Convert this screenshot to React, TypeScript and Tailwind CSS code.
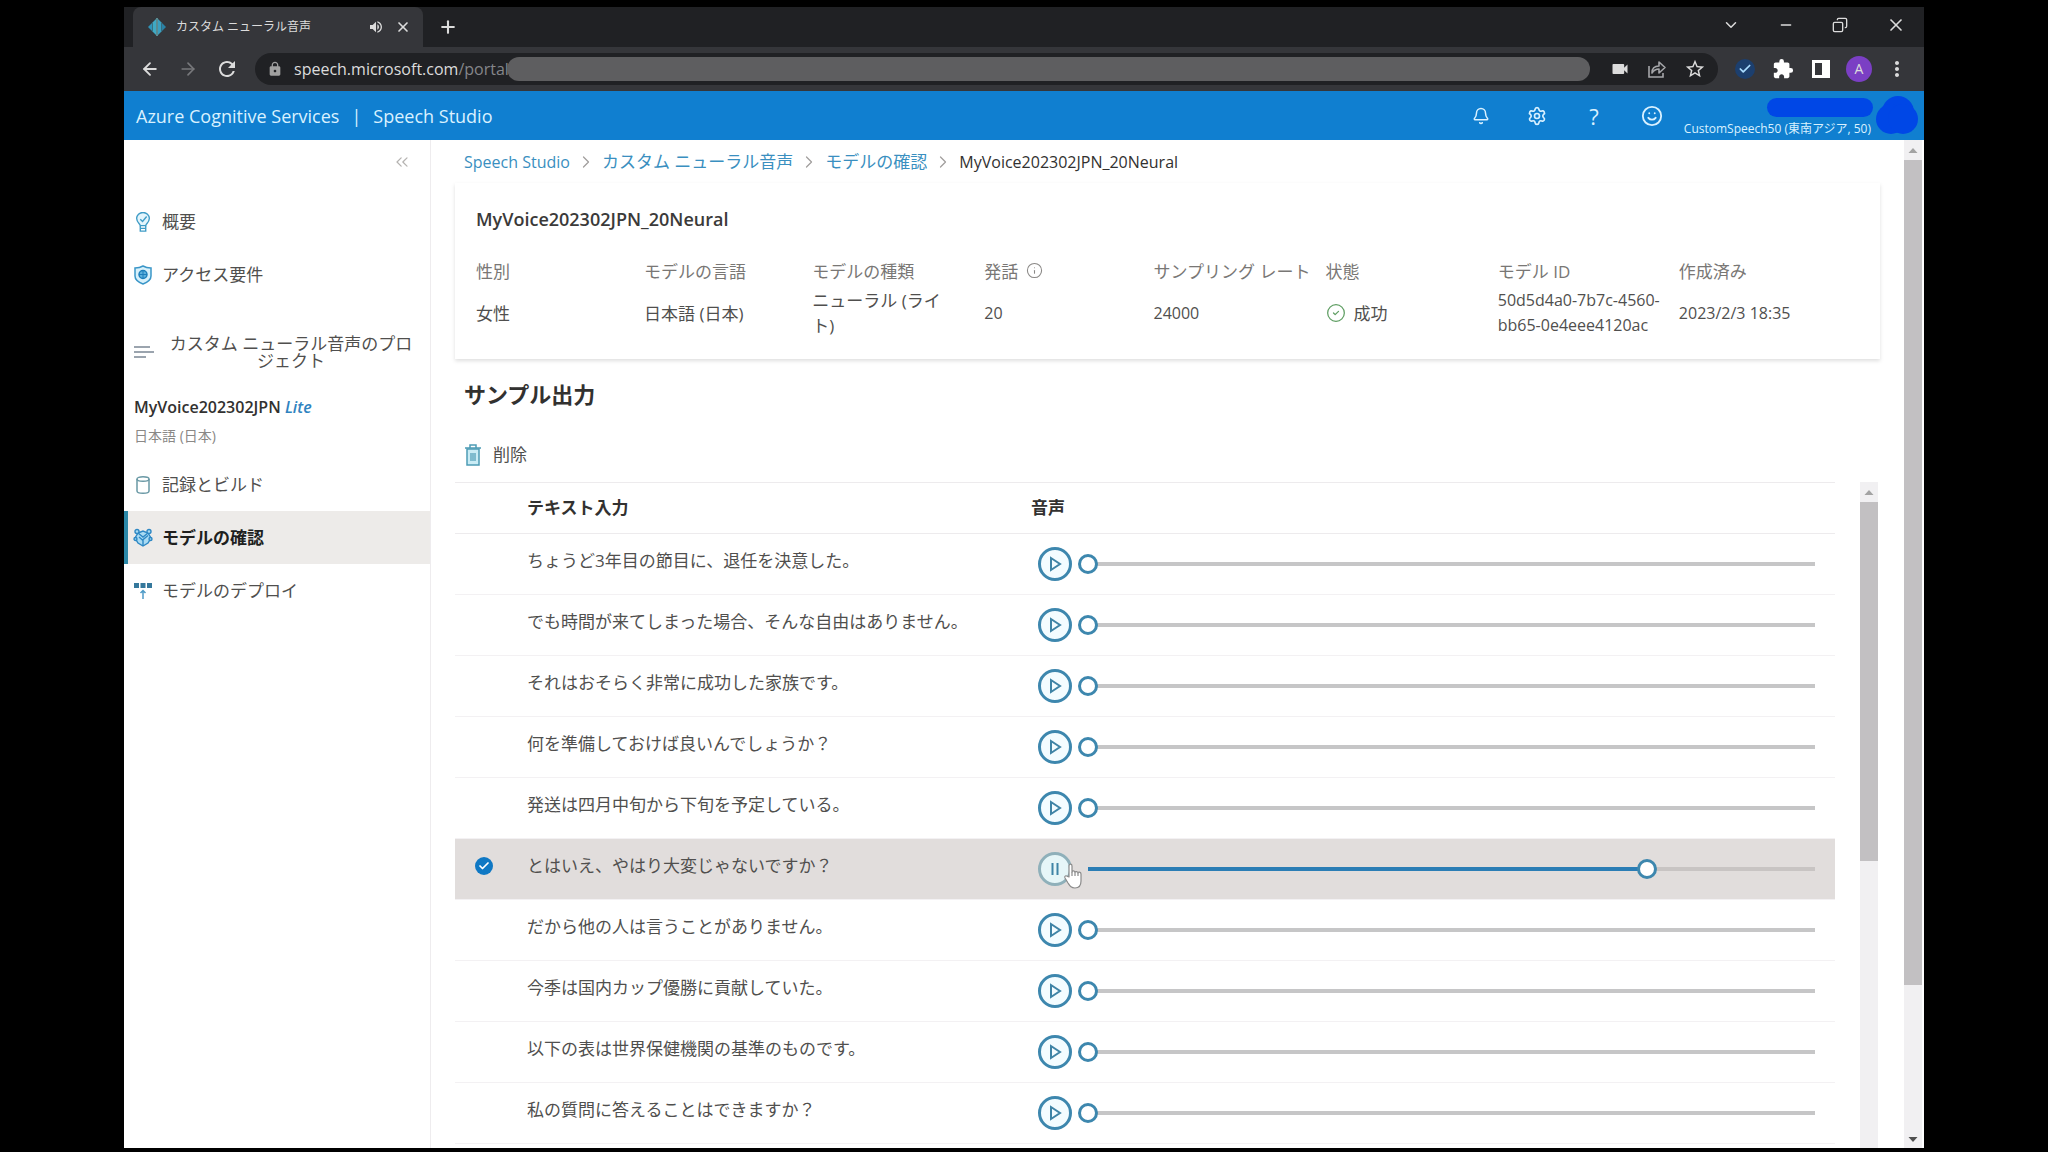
import { useState } from "react";
import type { ReactNode } from "react";
import {
  ArrowLeft,
  ArrowRight,
  Bell,
  Check,
  ChevronDown,
  ChevronRight,
  ChevronsLeft,
  CircleCheck,
  Copy,
  Info,
  Minus,
  Plus,
  Settings,
  Smile,
  X,
} from "lucide-react";
import {
  MdExtension,
  MdLock,
  MdMoreVert,
  MdRefresh,
  MdStarBorder,
  MdVideocam,
  MdVolumeUp,
} from "react-icons/md";

const SpeechLogo = () => (
  <svg viewBox="0 0 18 18" className="h-[18px] w-[18px]" aria-hidden="true">
    <path d="M0 9 4 5v8z" fill="#2f93b8" />
    <path d="M4.500 4.500 8 1v16l-3.500-3.500z" fill="#3fa9c4" />
    <path d="M8.500 0l1 0v18h-1z" fill="#7fdde8" />
    <path d="M10 1l3.500 3.500v9L10 17z" fill="#3a9fc0" />
    <path d="M14 5l4 4-4 4z" fill="#2a82a6" />
  </svg>
);

const ShareIcon = () => (
  <svg viewBox="0 0 20 20" className="h-5 w-5" fill="none" stroke="currentColor" strokeWidth="1.6" aria-hidden="true">
    <path d="M2 7v11h14v-4" />
    <path d="M5 14c0-5 3-7 7-7V3l6 5.500-6 5.500v-4c-3 0-5 1-7 4z" strokeLinejoin="round" />
  </svg>
);

const SidePanelIcon = () => (
  <svg viewBox="0 0 18 18" className="h-[18px] w-[18px]" aria-hidden="true">
    <path fill="currentColor" fillRule="evenodd" d="M0 0h18v18H0zM3 3v12h7V3z" />
  </svg>
);

const BulbIcon = () => (
  <svg viewBox="0 0 18 22" className="h-5 w-[18px]" fill="none" stroke="#3f9cc6" strokeWidth="1.5" aria-hidden="true">
    <path d="M6 15c0-2-4-3.500-4-8a7 6.500 0 0 1 14 0c0 4.500-4 6-4 8z" fill="#e3f5fc" />
    <path d="M6 15v6h6v-6M6 18h6" />
    <path d="m6 8 2.500 2.500L13 5" />
  </svg>
);

const ShieldIcon = () => (
  <svg viewBox="0 0 18 20" className="h-5 w-[18px]" fill="none" stroke="#3a96c8" strokeWidth="1.5" aria-hidden="true">
    <path d="M9 1c2.500 1.500 5 2 8 2v8c0 4-4 6.500-8 8-4-1.500-8-4-8-8V3c3 0 5.500-.5 8-2z" fill="#d8f1fb" />
    <circle cx="9" cy="9.500" r="4" fill="#5db1dd" stroke="#1e7fbb" />
    <path d="M5 9.500h8M9 5.500v8" stroke="#1e7fbb" strokeWidth="1" />
  </svg>
);

const ListIcon = () => (
  <svg viewBox="0 0 20 16" className="h-4 w-5" stroke="#7b8794" strokeWidth="1.6" aria-hidden="true">
    <path d="M0 3h16M0 8h20M0 13h12" />
  </svg>
);

const DatabaseIcon = () => (
  <svg viewBox="0 0 18 20" className="h-5 w-[18px]" fill="none" stroke="#6a99a5" strokeWidth="1.5" aria-hidden="true">
    <path d="M3 4v12c0 3 12 3 12 0V4" />
    <ellipse cx="9" cy="4" rx="6" ry="2.300" />
  </svg>
);

const ModelIcon = () => (
  <svg viewBox="0 0 20 20" className="h-5 w-5" fill="#a9dbf3" stroke="#2e88c4" strokeWidth="1.400" aria-hidden="true">
    <path d="M5 5 10 3l5 2 3 5-3 5-5 3-5-3-3-5z" />
    <path d="m6 9 3.500 3L15 7.500M5 5l5 4 5-4M10 12v6" fill="none" />
    <circle cx="4" cy="3.500" r="2" />
    <circle cx="16" cy="3.500" r="2" />
    <circle cx="2.500" cy="11" r="1.500" />
    <circle cx="17.500" cy="11" r="1.500" />
  </svg>
);

const DeployIcon = () => (
  <svg viewBox="0 0 18 20" className="h-5 w-[18px]" aria-hidden="true">
    <path d="M0 2h5v5H0zM6.500 2h5v5h-5zM13 2h5v5h-5z" fill="#35789c" />
    <path d="M9 18v-8M6.500 12 9 9.500l2.500 2.500" fill="none" stroke="#4f9bc7" strokeWidth="1.500" />
  </svg>
);

const TrashIcon = () => (
  <svg viewBox="0 0 16 22" className="h-[22px] w-4" fill="none" stroke="#4d9cb5" strokeWidth="1.500" aria-hidden="true">
    <path d="M2 5h12v16H2z" fill="#c9ecf5" />
    <path d="M0 4h16M5 3.500V1h6v2.500" />
    <path d="M6 9v8M8 9v8M10 9v8" strokeWidth="1.200" />
  </svg>
);

const HandCursor = () => (
  <svg
    viewBox="0 0 20 26"
    className="pointer-events-none absolute left-8 top-6 z-10 h-[26px] w-5"
    fill="#fff"
    stroke="#8a8a8a"
    strokeWidth="1.200"
    strokeLinejoin="round"
    aria-hidden="true"
  >
    <path d="M6 14V3c0-2.500 3-2.500 3 0v6c0-1.500 3-1.500 3 .5 0-1.500 3-1 3 .5 0-1.500 3-1 3 1v7c0 4-2 7-6 7s-5-2-7-5l-3-5c-1-2 1-3 2.500-1.500z" />
    <path d="M9 9v4M12 9.500V13M15 10v3" />
  </svg>
);

type NavItem = { id: string; label: string; icon: ReactNode };

const topNav: NavItem[] = [
  { id: "overview", label: "概要", icon: <BulbIcon /> },
  { id: "access", label: "アクセス要件", icon: <ShieldIcon /> },
];

const projectNav: NavItem[] = [
  { id: "record", label: "記録とビルド", icon: <DatabaseIcon /> },
  { id: "review", label: "モデルの確認", icon: <ModelIcon /> },
  { id: "deploy", label: "モデルのデプロイ", icon: <DeployIcon /> },
];

const details: { label: ReactNode; value: ReactNode }[] = [
  { label: "性別", value: "女性" },
  { label: "モデルの言語", value: "日本語 (日本)" },
  { label: "モデルの種類", value: <span className="max-w-36">ニューラル (ライト)</span> },
  {
    label: (
      <>
        発話
        <Info className="mb-1 h-[17px] w-[17px] text-[#8a8886]" strokeWidth={1.5} />
      </>
    ),
    value: <span className="text-base">20</span>,
  },
  { label: "サンプリング レート", value: <span className="text-base">24000</span> },
  {
    label: "状態",
    value: (
      <span className="flex items-center gap-2">
        <CircleCheck className="h-5 w-5 text-[#5f9e63]" strokeWidth={1.5} />
        成功
      </span>
    ),
  },
  {
    label: "モデル ID",
    value: <span className="text-base leading-[25px]">50d5d4a0-7b7c-4560-bb65-0e4eee4120ac</span>,
  },
  { label: "作成済み", value: <span className="text-base">2023/2/3 18:35</span> },
];

const samples = [
  "ちょうど3年目の節目に、退任を決意した。",
  "でも時間が来てしまった場合、そんな自由はありません。",
  "それはおそらく非常に成功した家族です。",
  "何を準備しておけば良いんでしょうか？",
  "発送は四月中旬から下旬を予定している。",
  "とはいえ、やはり大変じゃないですか？",
  "だから他の人は言うことがありません。",
  "今季は国内カップ優勝に貢献していた。",
  "以下の表は世界保健機関の基準のものです。",
  "私の質問に答えることはできますか？",
];

const PLAYING = 5;

const BrowserChrome = () => (
  <div className="flex-shrink-0 bg-[#202124] text-[#dcdcdc]">
    <div className="flex h-10 items-center pl-[9px]">
      <div className="flex h-full w-[290px] items-center rounded-t-lg bg-[#35363a] pl-[15px] pr-3">
        <SpeechLogo />
        <span className="ml-2.5 flex-1 whitespace-nowrap text-xs">カスタム ニューラル音声</span>
        <MdVolumeUp className="mr-[11px] h-4 w-4" />
        <button aria-label="タブを閉じる">
          <X className="h-4 w-4" strokeWidth={2.5} />
        </button>
      </div>
      <button aria-label="新しいタブ" className="ml-[15px]">
        <Plus className="h-5 w-5" strokeWidth={2.5} />
      </button>
      <div className="ml-auto flex items-center gap-[38px] pb-1 pr-[18px]">
        <ChevronDown className="h-[18px] w-[18px]" />
        <Minus className="h-4 w-4" />
        <Copy className="h-4 w-4 -scale-x-100" />
        <X className="h-5 w-5" />
      </div>
    </div>
    <div className="flex h-11 items-center bg-[#35363a] pl-4 pr-[15px]">
      <button aria-label="戻る">
        <ArrowLeft className="h-5 w-5" strokeWidth={2.2} />
      </button>
      <button aria-label="進む" className="ml-[18px] text-[#77787b]">
        <ArrowRight className="h-5 w-5" />
      </button>
      <button aria-label="再読み込み" className="ml-[17px]">
        <MdRefresh className="h-6 w-6" />
      </button>
      <div className="ml-4 flex h-8 flex-1 items-center rounded-full bg-[#202124] pl-3 pr-3">
        <MdLock className="h-4 w-4 text-[#a0a0a0]" />
        <span className="ml-[11px] text-base leading-6">
          speech.microsoft.com<span className="text-[#85868a]">/portal</span>
        </span>
        <span className="-ml-0.5 h-6 flex-1 rounded-full bg-[#5e5e60]" />
        <MdVideocam className="ml-5 h-5 w-5" />
        <span className="ml-[17px] text-[#a5a6a9]">
          <ShareIcon />
        </span>
        <MdStarBorder className="ml-[17px] h-[22px] w-[22px]" />
      </div>
      <span className="ml-[17px] flex h-5 w-5 items-center justify-center rounded-full bg-[#1c3f6e] text-[#a9dcff]">
        <Check className="h-3.5 w-3.5" strokeWidth={3} />
      </span>
      <MdExtension className="ml-[17px] h-[22px] w-[22px] text-white" />
      <span className="ml-[18px] text-white">
        <SidePanelIcon />
      </span>
      <span className="ml-4 flex h-[26px] w-[26px] items-center justify-center rounded-full bg-[#7b3fc4] text-sm">
        A
      </span>
      <MdMoreVert className="ml-[13px] h-6 w-6" />
    </div>
  </div>
);

const AppHeader = () => (
  <header className="flex h-[49px] flex-shrink-0 items-center bg-[#107fd0] pl-3 pr-[5px] text-[#d9f1ff]">
    <a href="#" className="text-lg leading-6">Azure Cognitive Services</a>
    <span className="mx-3 text-lg leading-6">|</span>
    <a href="#" className="text-lg leading-6">Speech Studio</a>
    <div className="ml-auto flex items-center gap-[37px]">
      <button aria-label="通知">
        <Bell className="h-[18px] w-[18px]" />
      </button>
      <button aria-label="設定">
        <Settings className="h-5 w-5" />
      </button>
      <button aria-label="ヘルプ" className="w-5 text-[22px] leading-6">
        ?
      </button>
      <button aria-label="フィードバック">
        <Smile className="h-[22px] w-[22px]" />
      </button>
    </div>
    <div className="ml-6 flex h-full w-[186px] flex-col items-end pt-[7px]">
      <span className="h-[19px] w-[106px] rounded-full bg-[#0047e6]" />
      <span className="mr-0.5 mt-1 whitespace-nowrap text-xs leading-4">CustomSpeech50 (東南アジア, 50)</span>
    </div>
    <svg viewBox="0 0 44 42" className="ml-0.5 h-[42px] w-11" fill="#0047e6" aria-hidden="true">
      <circle cx="23" cy="17" r="16" />
      <circle cx="16" cy="24" r="15" />
      <circle cx="28" cy="24" r="15" />
    </svg>
  </header>
);

const Sidebar = () => {
  const [active, setActive] = useState("review");

  const renderItem = ({ id, label, icon }: NavItem) => (
    <li key={id}>
      <button
        onClick={() => setActive(id)}
        className={`flex h-[53px] w-full items-center border-l-4 pl-[5px] text-left ${
          active === id
            ? "border-[#2b88a8] bg-[#edebe9] font-bold text-[#201f1e]"
            : "border-transparent text-[#504f4e]"
        }`}
      >
        <span className="flex w-5 justify-center">{icon}</span>
        <span className="ml-[9px]">{label}</span>
      </button>
    </li>
  );

  return (
    <aside className="w-[307px] flex-shrink-0 border-r border-[#eeecee] text-[17px] leading-6">
      <div className="flex h-[55px] justify-end pr-[18px] pt-3">
        <button aria-label="メニューを折りたたむ" className="h-5">
          <ChevronsLeft className="h-5 w-5 text-[#b5b3b1]" strokeWidth={1.5} />
        </button>
      </div>
      <ul>{topNav.map(renderItem)}</ul>
      <div className="mt-[34px] flex h-[34px] items-center pl-2.5 pr-4 text-[#504f4e]">
        <ListIcon />
        <span className="ml-2 flex-1 pl-1.5 text-center leading-[17px]">カスタム ニューラル音声のプロジェクト</span>
      </div>
      <div className="mt-[26px] pl-2.5 text-base leading-6 text-[#323130]">
        <span className="font-semibold">MyVoice202302JPN</span>{" "}
        <em className="font-semibold text-[#2f83c0]">Lite</em>
      </div>
      <div className="mt-[5px] pl-2.5 text-sm leading-6 text-[#8a8886]">日本語 (日本)</div>
      <ul className="mt-2.5">{projectNav.map(renderItem)}</ul>
    </aside>
  );
};

const PlayButton = ({ playing, onClick }: { playing: boolean; onClick: () => void }) => (
  <button
    onClick={onClick}
    aria-label={playing ? "一時停止" : "再生"}
    className={`flex h-[34px] w-[34px] flex-shrink-0 items-center justify-center rounded-full border-[3px] ${
      playing ? "border-[#8fb0ba] bg-[#e6f6f8]" : "border-[#3d87ae] bg-[#f3fcff]"
    }`}
  >
    <svg viewBox="0 0 16 16" className="h-4 w-4" fill="none" stroke="#3f84a6" strokeWidth="2" aria-hidden="true">
      {playing ? <path d="M5.500 2v12M10.500 2v12" /> : <path d="M4 2v12l9-6z" />}
    </svg>
  </button>
);

const ProgressSlider = ({ label, initial, active }: { label: string; initial: number; active: boolean }) => {
  const [value, setValue] = useState(initial);
  // the thumb is 20px wide, so its centre runs from 10px to 100% - 10px
  const centre = `calc(10px + (100% - 20px) * ${value / 100})`;
  const rest = active ? "#c8c4c3" : "#c6c6c7";

  return (
    <input
      type="range"
      aria-label={label}
      value={value}
      onChange={(e) => setValue(Number(e.target.value))}
      style={{
        backgroundImage: `linear-gradient(to right, transparent 10px, #2b7db5 10px, #2b7db5 ${centre}, ${rest} ${centre})`,
      }}
      className="ml-1.5 h-5 min-w-0 flex-1 appearance-none bg-[length:100%_4px] bg-center bg-no-repeat [&::-webkit-slider-thumb]:h-5 [&::-webkit-slider-thumb]:w-5 [&::-webkit-slider-thumb]:appearance-none [&::-webkit-slider-thumb]:rounded-full [&::-webkit-slider-thumb]:border-[3px] [&::-webkit-slider-thumb]:border-solid [&::-webkit-slider-thumb]:border-[#3d87ae] [&::-webkit-slider-thumb]:bg-white"
    />
  );
};

const SampleTable = () => {
  const [playing, setPlaying] = useState(PLAYING);

  return (
    <table className="w-full table-fixed border-collapse text-left text-[17px] leading-6">
      <colgroup>
        <col className="w-[72px]" />
        <col className="w-[504px]" />
        <col />
      </colgroup>
      <thead>
        <tr className="h-[51px] border-y border-[#edebed] text-[#323130]">
          <th />
          <th className="font-bold">テキスト入力</th>
          <th className="font-bold">音声</th>
        </tr>
      </thead>
      <tbody>
        {samples.map((text, i) => {
          const active = i === playing;
          return (
            <tr
              key={text}
              className={`h-[61px] border-b border-[#f3f1f3] text-[#504f4e] ${active ? "bg-[#e1dddc]" : ""}`}
            >
              <td className="pb-1.5 pl-5">
                <span className="grid h-[18px] w-[18px] place-items-center">
                  <input
                    type="checkbox"
                    aria-label={text}
                    checked={active}
                    onChange={() => setPlaying(i)}
                    className="col-start-1 row-start-1 h-[18px] w-[18px] appearance-none rounded-full checked:bg-[#0f78c4]"
                  />
                  {active && (
                    <Check className="pointer-events-none col-start-1 row-start-1 h-3 w-3 text-white" strokeWidth={3.5} />
                  )}
                </span>
              </td>
              <td className="whitespace-nowrap pb-1.5">{text}</td>
              <td className="relative pl-[7px] pr-5">
                <div className="flex items-center">
                  <PlayButton playing={active} onClick={() => setPlaying(i)} />
                  <ProgressSlider label={`${text} 再生位置`} initial={i === PLAYING ? 78 : 0} active={active} />
                </div>
                {active && <HandCursor />}
              </td>
            </tr>
          );
        })}
      </tbody>
    </table>
  );
};

const Arrow = ({ down = false, dark = false }: { down?: boolean; dark?: boolean }) => (
  <svg viewBox="0 0 18 18" className="h-[18px] w-[18px] flex-shrink-0" fill={dark ? "#505050" : "#a3a3a3"} aria-hidden="true">
    {down ? <path d="M4.500 7h9L9 12z" /> : <path d="M4.500 11h9L9 6z" />}
  </svg>
);

const CrumbArrow = () => (
  <ChevronRight className="mx-1.5 h-5 w-5 text-[#a19f9d]" strokeWidth={1.5} />
);

const ModelPage = () => (
  <main className="flex min-w-0 flex-1 flex-col overflow-hidden px-6 pt-[9px]">
    <nav className="flex h-[26px] flex-shrink-0 items-center pl-[9px] text-[17px] leading-6 text-[#3a8fc0]">
      <a href="#" className="text-base">Speech Studio</a>
      <CrumbArrow />
      <a href="#">カスタム ニューラル音声</a>
      <CrumbArrow />
      <a href="#">モデルの確認</a>
      <CrumbArrow />
      <span className="text-base text-[#323130]">MyVoice202302JPN_20Neural</span>
    </nav>

    <section className="mt-2 flex-shrink-0 pb-[21px] pl-[21px] pr-5 pt-[22px] text-[17px] shadow-[0_2px_4px_rgba(0,0,0,0.13)]">
      <h1 className="text-lg font-semibold leading-7 text-[#3b3a39]">MyVoice202302JPN_20Neural</h1>
      <dl className="mt-[27px] grid grid-cols-[168fr_168fr_172fr_169fr_172fr_172fr_181fr_181fr]">
        {details.map(({ label, value }, i) => (
          <div key={i} className="min-w-0">
            <dt className="flex h-6 items-center gap-2 whitespace-nowrap leading-6 text-[#797775]">{label}</dt>
            <dd className="mt-1 flex h-[50px] items-center pr-2 leading-[25px] text-[#504f4e]">{value}</dd>
          </div>
        ))}
      </dl>
    </section>

    <h2 className="mt-[19px] flex-shrink-0 pl-[9px] text-[22px] font-bold leading-8 text-[#323130]">サンプル出力</h2>
    <button className="mt-[29px] flex h-8 flex-shrink-0 items-center gap-3 self-start pl-2.5 text-[17px] text-[#504f4e]">
      <TrashIcon />
      削除
    </button>

    <div className="mt-[11px] flex min-h-0 flex-1">
      <div className="min-w-0 flex-1 overflow-hidden">
        <SampleTable />
      </div>
      <div className="ml-[25px] mr-0.5 flex w-[18px] flex-shrink-0 flex-col bg-[#f1f0f2] pt-0.5">
        <Arrow />
        <div className="h-[54%] bg-[#c2c0c2]" />
      </div>
    </div>
  </main>
);

const App = () => (
  <div className="flex h-screen flex-col overflow-hidden bg-black px-[124px] pb-1 pt-[7px] font-['Open_Sans','Noto_Sans_CJK_JP',sans-serif]">
    <BrowserChrome />
    <AppHeader />
    <div className="flex min-h-0 flex-1 bg-white">
      <Sidebar />
      <ModelPage />
      <div className="mr-0.5 flex w-[18px] flex-shrink-0 flex-col bg-[#f1f0f2] pt-0.5">
        <Arrow />
        <div className="h-[82%] bg-[#c2c0c2]" />
        <div className="mt-auto">
          <Arrow down dark />
        </div>
      </div>
    </div>
  </div>
);

export default App;
